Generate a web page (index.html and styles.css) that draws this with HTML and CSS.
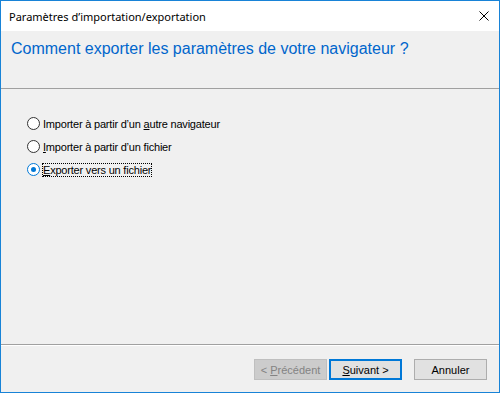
FILE: index.html
```html
<!DOCTYPE html>
<html lang="fr">
<head>
    <meta charset="UTF-8">
    <title>Paramètres d'importation/exportation</title>
    <link rel="stylesheet" href="styles.css">
</head>
<body>
    <div class="window">
        <div class="titlebar">
            <span class="title">Paramètres d’importation/exportation</span>
            <svg class="close" width="10" height="10" viewBox="0 0 10 10">
                <path d="M0.5 0.5 L9.5 9.5 M9.5 0.5 L0.5 9.5" stroke="#000" stroke-width="1" fill="none"/>
            </svg>
        </div>
        <div class="header">
            <h1>Comment exporter les paramètres de votre navigateur ?</h1>
        </div>
        <div class="content">
            <label class="option">
                <span class="radio"></span>
                <span class="label">Importer à partir d’un <u>a</u>utre navigateur</span>
            </label>
            <label class="option">
                <span class="radio"></span>
                <span class="label"><u>I</u>mporter à partir d’un fichier</span>
            </label>
            <label class="option checked">
                <span class="radio"></span>
                <span class="label focus"><u>E</u>xporter vers un fichier</span>
            </label>
        </div>
        <div class="footer">
            <button class="btn" disabled>&lt; <u>P</u>récédent</button>
            <button class="btn default"><u>S</u>uivant &gt;</button>
            <button class="btn cancel">Annuler</button>
        </div>
    </div>
</body>
</html>
```

FILE: styles.css
```css
body {
    margin: 0;
    font-family: "Liberation Sans", Arial, sans-serif;
}
.window {
    width: 500px;
    height: 393px;
    box-sizing: border-box;
    border: 1px solid #1883d7;
    background: #f0f0f0;
    display: flex;
    flex-direction: column;
}
.titlebar {
    height: 30px;
    background: #ffffff;
    display: flex;
    align-items: center;
    justify-content: space-between;
    padding: 0 10px 0 8px;
}
.title {
    font-family: "Noto Sans", sans-serif;
    font-size: 11px;
    color: #000000;
}
.header {
    border-bottom: 1px solid #a0a0a0;
    padding: 9px 0 0 10px;
    box-sizing: border-box;
    height: 58px;
}
.header h1 {
    margin: 0;
    font-weight: normal;
    font-size: 16px;
    color: #0066cc;
}
.content {
    flex: 1;
    padding: 28px 0 0 26px;
    display: flex;
    flex-direction: column;
    gap: 10px;
}
.option {
    display: flex;
    align-items: center;
    height: 13px;
    font-size: 11px;
    letter-spacing: -0.2px;
    color: #000000;
}
.radio {
    width: 11px;
    height: 11px;
    border: 1px solid #333333;
    border-radius: 50%;
    background: #ffffff;
    margin-right: 3px;
    position: relative;
}
.checked .radio {
    border-color: #0078d7;
}
.checked .radio::after {
    content: '';
    position: absolute;
    left: 3px;
    top: 3px;
    width: 5px;
    height: 5px;
    border-radius: 50%;
    background: #0078d7;
}
.label.focus {
    outline: 1px dotted #000000;
    outline-offset: 0;
}
.footer {
    height: 48px;
    border-top: 1px solid #a0a0a0;
    box-shadow: inset 0 1px 0 #ffffff;
    display: flex;
    justify-content: flex-end;
    padding: 14px 12px 0 0;
    box-sizing: border-box;
}
.btn {
    width: 73px;
    height: 21px;
    box-sizing: border-box;
    border: 1px solid #adadad;
    background: #e1e1e1;
    font-family: "Liberation Sans", Arial, sans-serif;
    font-size: 11px;
    color: #000000;
    padding: 0;
    margin-left: 2px;
}
.btn:disabled {
    background: #cccccc;
    border-color: #bfbfbf;
    color: #838383;
}
.btn.default {
    border: 2px solid #0078d7;
}
.btn.cancel {
    margin-left: 12px;
}
```
